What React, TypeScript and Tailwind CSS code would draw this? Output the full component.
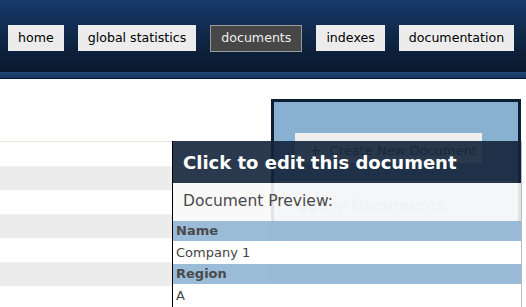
import React from "react";

const navItems = [
  { label: "home", active: false },
  { label: "global statistics", active: false },
  { label: "documents", active: true },
  { label: "indexes", active: false },
  { label: "documentation", active: false },
];

export default function App() {
  return (
    <div
      className="relative w-[526px] h-[307px] overflow-hidden bg-white"
      style={{ fontFamily: '"DejaVu Sans", Verdana, sans-serif' }}
    >
      {/* Header */}
      <div className="h-[72px] bg-gradient-to-b from-[#173b6c] via-[#0f2748] to-[#0a182b] flex items-start pt-[25px] pl-[8px] gap-[14px]">
        {navItems.map((n) =>
          n.active ? (
            <div
              key={n.label}
              className="h-[27px] px-[10px] flex items-center bg-[#474747] border border-[#9a9a9a] text-[#eeeeee] text-[12.6px] leading-none"
            >
              {n.label}
            </div>
          ) : (
            <div
              key={n.label}
              className="h-[26px] px-[10px] flex items-center bg-[#ececec] text-black text-[12.6px] leading-none"
            >
              {n.label}
            </div>
          )
        )}
      </div>
      <div className="h-[6px] bg-gradient-to-b from-[#21487a] to-[#173558]" />
      <div className="h-px bg-[#0c1c30]" />

      {/* Main list area */}
      <div className="w-[172px] pt-[62px]">
        <div className="h-px bg-[#e6e3de]" />
        <div className="h-[24px]" />
        <div className="h-[24px] bg-[#ececec]" />
        <div className="h-[24px]" />
        <div className="h-[24px] bg-[#ececec]" />
        <div className="h-[24px]" />
        <div className="h-[24px] bg-[#ececec]" />
      </div>

      {/* Side panel (behind popup) */}
      <div className="absolute left-[271px] top-[99px] w-[250px] h-[230px] border-[3px] border-[#0c1f35] bg-[#87b0d1] flex flex-col">
        <div className="pt-[31px] pl-[21px]">
          <div className="w-[187px] h-[30px] bg-[#eeeeee] flex items-center pl-[14px] gap-[8px] pt-[6px] text-[13px] text-[#555]">
            <span className="text-[15px] leading-none">+</span>
            <span>Create New Document</span>
          </div>
        </div>
        <div className="mt-[18px] flex-1 bg-[#d7dde4] px-[21px] pt-[14px]">
          <div className="text-[15px] font-bold text-[#aab3bd]">Query Documents</div>
          <div className="mt-[2px] text-[12px] text-[#aab3bd]">Index Name</div>
          <div className="mt-[3px] w-[205px] h-[21px] bg-white" />
        </div>
      </div>

      {/* Popup */}
      <div className="absolute left-[172px] top-[141px] w-[350px] h-[180px] border-l border-l-black border-r border-r-[#b8bcc2] flex flex-col">
        <div className="h-[42px] bg-[#13243a]/90 flex items-center pl-[10px] pt-[1px] text-white text-[18px] font-bold">
          Click to edit this document
        </div>
        <div className="flex-1 bg-[#f8f8f9]/90">
          <div className="h-[38px] flex items-center pl-[10px] text-[15.5px] text-[#4a4a4a]">
            Document Preview:
          </div>
          <div className="h-[20px] bg-[#8fb5d4]/90 flex items-center pl-[3px] text-[13px] font-bold text-[#4a4a4a]">
            Name
          </div>
          <div className="h-[23px] bg-white/95 flex items-center pl-[3px] text-[13px] text-[#444]">
            Company 1
          </div>
          <div className="h-[20px] bg-[#8fb5d4]/90 flex items-center pl-[3px] text-[13px] font-bold text-[#4a4a4a]">
            Region
          </div>
          <div className="h-[23px] bg-white/95 flex items-center pl-[3px] text-[13px] text-[#444]">
            A
          </div>
        </div>
      </div>
    </div>
  );
}
